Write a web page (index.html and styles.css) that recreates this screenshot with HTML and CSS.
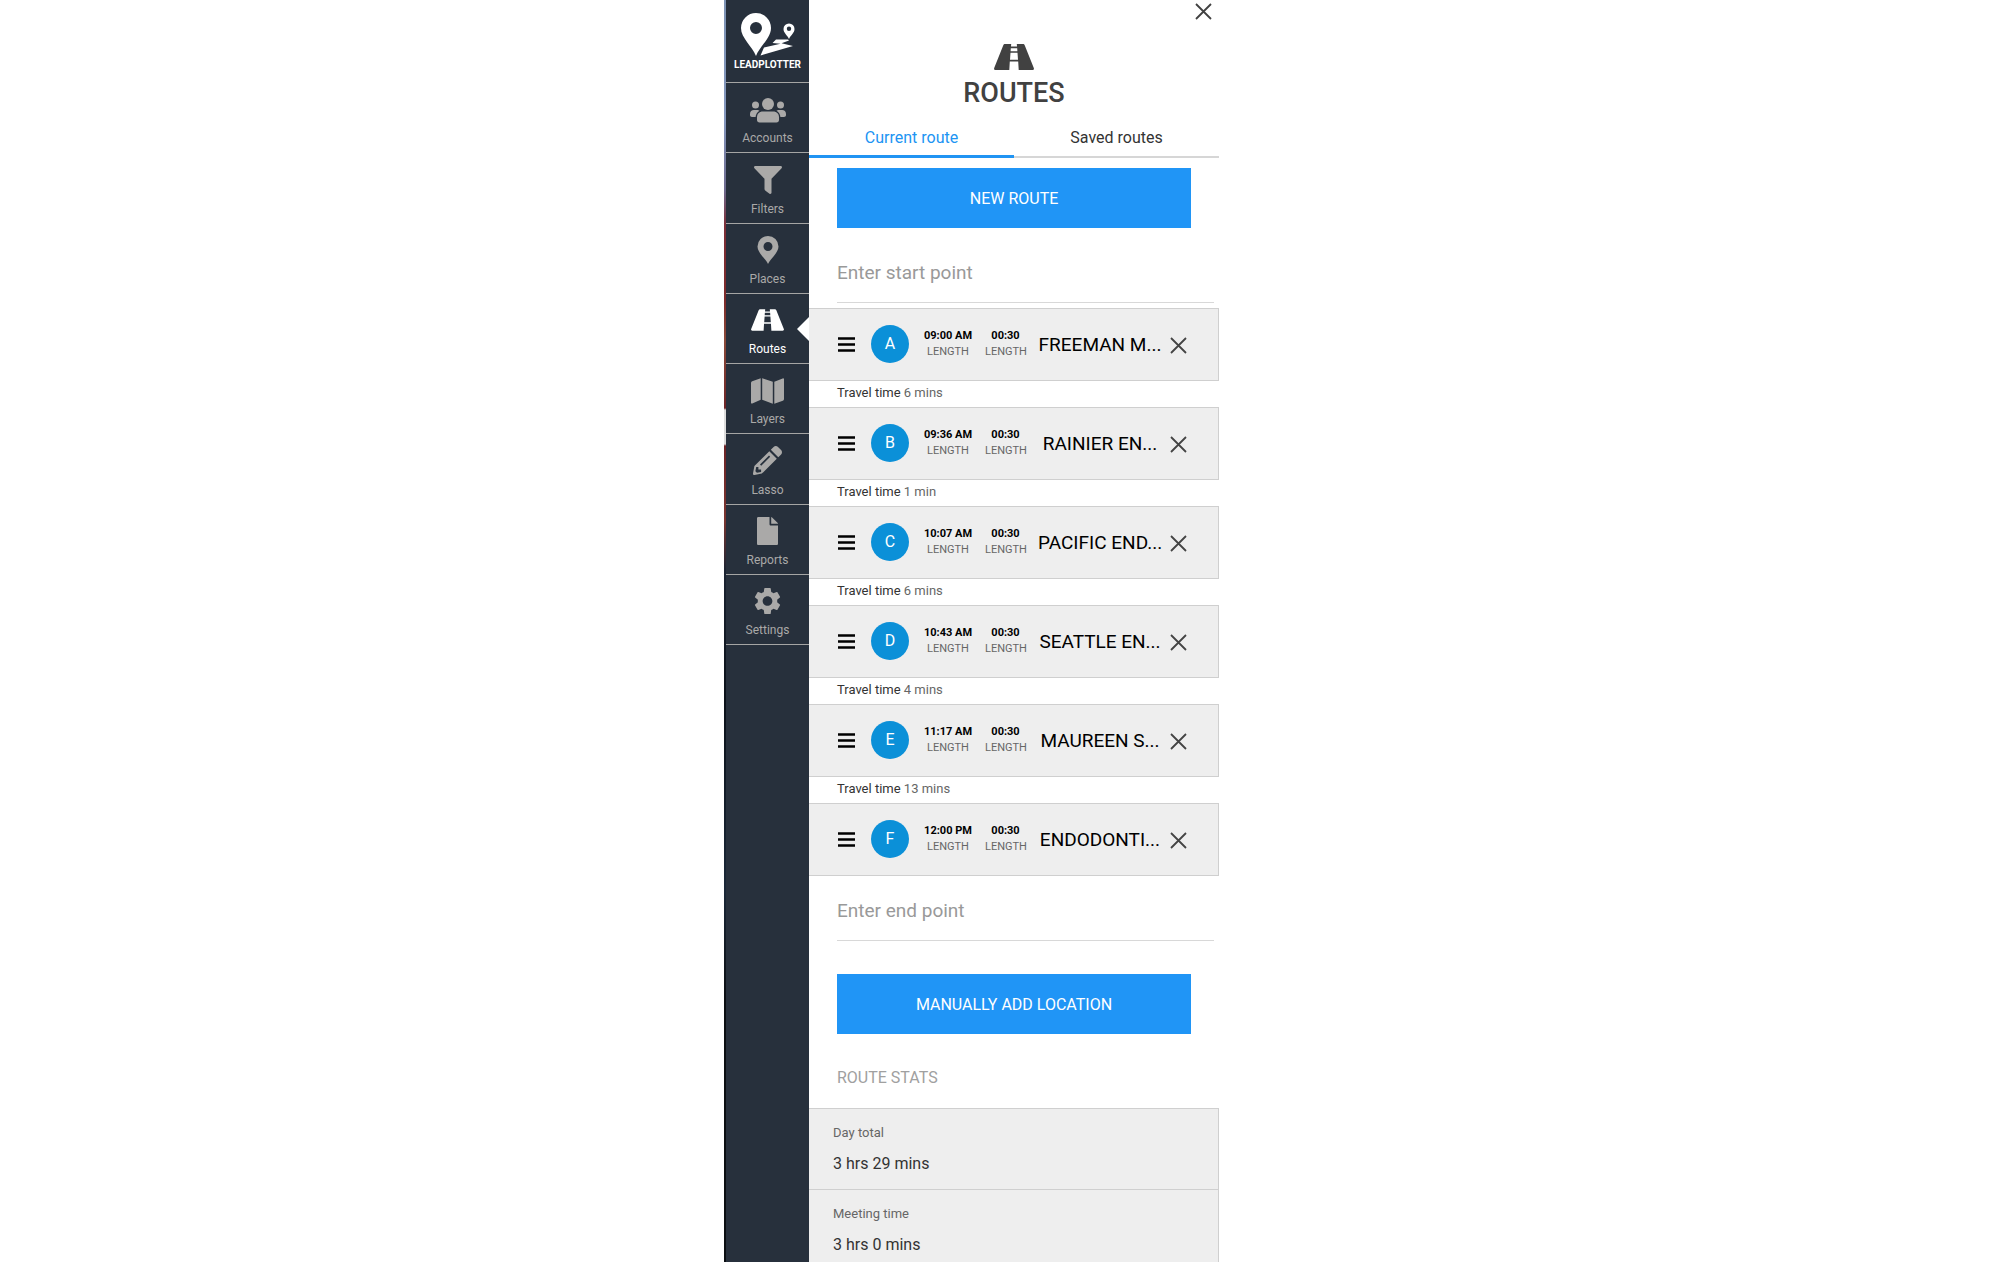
FILE: index.html
```html
<!DOCTYPE html>
<html lang="en">
<head>
<meta charset="utf-8">
<title>LeadPlotter – Routes</title>
<link rel="stylesheet" href="styles.css">
</head>
<body>
<svg class="sprite" aria-hidden="true">
  <symbol id="road" viewBox="0 0 40 26">
    <path d="M11 0h6.200L17 2.600h6L22.800 0H29c.8 0 1.400.5 1.700 1.200L39.800 24c.4 1.100-.2 2-1.300 2H24.700l-.5-8.500h-8.400l-.5 8.500H1.500C.4 26-.2 25.100.2 24L9.300 1.200C9.600.500 10.200 0 11 0zM16.800 4.200l-.2 3h6.800l-.2-3zM16.500 8.800l-.5 7h8l-.5-7z" fill-rule="evenodd"/>
  </symbol>
  <symbol id="cross" viewBox="0 0 17 17"><path d="M1 1l15 15M16 1L1 16" fill="none" stroke="currentColor" stroke-width="1.800"/></symbol>
  <symbol id="bars" viewBox="0 0 17 15"><path d="M0 1.500h17M0 7.500h17M0 13.500h17" fill="none" stroke="currentColor" stroke-width="2.600"/></symbol>
</svg>
<div class="app">
  <nav class="sidebar" aria-label="Main">
    <a class="logo" href="#">
      <svg viewBox="0 0 56 44" width="56" height="44" aria-hidden="true">
        <path fill-rule="evenodd" d="M16 43C12 33 1 25 1 15a15 15 0 0 1 30 0C31 25 20 33 16 43zM16 9a6 6 0 1 0 0 12 6 6 0 0 0 0-12z"/>
        <path fill-rule="evenodd" d="M49 26c-1.800-4-5.500-6-5.500-10a5.500 5.500 0 0 1 11 0c0 4-3.700 6-5.500 10zM49 13.500a2.200 2.200 0 1 0 0 4.400 2.200 2.200 0 0 0 0-4.400z"/>
        <path d="M48 26.500H36L32.500 30l8 .8L24 34.500 20.500 42.500 53 33l-11.500-2.800 7.500-2.700z"/>
      </svg>
      <span>LEADPLOTTER</span>
    </a>
    <ul class="menu">
      <li><a class="item" href="#"><svg viewBox="0 0 36 26" width="36" height="26" aria-hidden="true"><circle cx="18" cy="7" r="6"/><circle cx="5.500" cy="8" r="3.500"/><circle cx="30.500" cy="8" r="3.500"/><path d="M13 14.500h10c4 0 6 2.500 6 6V23c0 1.500-1 2.500-2.500 2.500h-17C8 25.500 7 24.500 7 23v-2.500c0-3.500 2-6 6-6zM4 13h3c1 0 2 .3 2.500.8C7 15.500 5.800 17.500 5.600 20H2c-1.200 0-2-.8-2-2v-1c0-2.400 1.600-4 4-4zM32 13h-3c-1 0-2 .3-2.500.8 2.500 1.700 3.700 3.700 3.900 6.200H34c1.200 0 2-.8 2-2v-1c0-2.400-1.600-4-4-4z"/></svg><span>Accounts</span></a></li>
      <li><a class="item" href="#"><svg viewBox="0 0 28 28" width="28" height="28" aria-hidden="true"><path d="M1.300 0h25.400c1.200 0 1.700 1.400.9 2.200L17.500 12.800v14c0 1.100-1.200 1.500-2 .9l-4-3c-.6-.4-1-1-1-1.700V12.800L.4 2.200C-.4 1.400.1 0 1.300 0z"/></svg><span>Filters</span></a></li>
      <li><a class="item" href="#"><svg viewBox="0 0 22 28" width="22" height="28" aria-hidden="true"><path fill-rule="evenodd" d="M11 28C9 23 .5 17 .5 10.500a10.500 10.500 0 0 1 21 0C21.500 17 13 23 11 28zM11 6a4.500 4.500 0 1 0 0 9 4.500 4.500 0 0 0 0-9z"/></svg><span>Places</span></a></li>
      <li><a class="item active" href="#" aria-current="page"><svg width="33" height="22" aria-hidden="true"><use href="#road"/></svg><span>Routes</span></a></li>
      <li><a class="item" href="#"><svg viewBox="0 0 33 26" width="33" height="26" aria-hidden="true"><path d="M0 5c0-.9.500-1.500 1.200-1.800L9.700.2v21.500L1.300 25.500c-.7.300-1.300 0-1.300-.8zM11.200.2l10.600 3.600v21.900l-10.600-3.900zM23.300 3.800L31.700.4c.7-.3 1.300 0 1.300.8V21c0 .9-.5 1.500-1.200 1.800l-8.500 3z"/></svg><span>Layers</span></a></li>
      <li><a class="item" href="#"><svg viewBox="0 0 29 29" width="29" height="29" aria-hidden="true"><path fill-rule="evenodd" d="M16.300 5.200l7.500 7.500L8.800 27.600 1.500 29c-.9.200-1.600-.5-1.500-1.400l1.400-7.500zM3.200 21l-.8 4.200 1.500 1.500 4.200-.8v-2.300H5.400V21zM16 9.500l-9 9 1.200 1.200 9-9zM17.800 3.700L20.600.9c1.200-1.200 3.200-1.200 4.400 0l3.100 3.100c1.200 1.200 1.200 3.200 0 4.400l-2.800 2.800z"/></svg><span>Lasso</span></a></li>
      <li><a class="item" href="#"><svg viewBox="0 0 21 28" width="21" height="28" aria-hidden="true"><path d="M1.300 0h11.200v7.200c0 .7.600 1.300 1.300 1.300H21v18.200c0 .7-.6 1.300-1.300 1.300H1.300C.6 28 0 27.400 0 26.700V1.300C0 .6.600 0 1.300 0zM14.200 0c.4.100.7.200.9.500l5.400 5.300c.3.300.5.600.5 1h-6.800z"/></svg><span>Reports</span></a></li>
      <li><a class="item" href="#"><svg viewBox="2 2 20 20" width="27" height="28" aria-hidden="true"><path d="M19.140 12.940c.04-.3.060-.61.060-.94 0-.32-.02-.64-.07-.94l2.030-1.580c.18-.14.230-.41.120-.61l-1.920-3.320c-.12-.22-.37-.29-.59-.22l-2.390.96c-.5-.38-1.030-.7-1.620-.94l-.36-2.540c-.04-.24-.24-.41-.48-.41h-3.840c-.24 0-.43.17-.47.41l-.36 2.540c-.59.240-1.130.57-1.620.94l-2.390-.96c-.22-.08-.47 0-.59.220L2.740 8.870c-.12.210-.08.470.12.610l2.030 1.580c-.05.300-.09.630-.09.940s.02.640.07.940l-2.030 1.580c-.18.140-.23.410-.12.610l1.920 3.320c.12.220.37.290.59.220l2.390-.96c.5.380 1.030.7 1.620.94l.36 2.540c.05.240.24.410.48.410h3.840c.24 0 .44-.17.470-.41l.36-2.540c.59-.24 1.130-.56 1.620-.94l2.390.96c.22.080.47 0 .59-.22l1.920-3.320c.12-.22.070-.47-.12-.61l-2.010-1.580zM12 15.600c-1.980 0-3.600-1.620-3.600-3.600s1.620-3.600 3.600-3.600 3.600 1.620 3.600 3.600-1.620 3.600-3.600 3.600z"/></svg><span>Settings</span></a></li>
    </ul>
  </nav>

  <main class="panel">
    <header class="head">
      <button class="close" type="button" aria-label="Close panel"><svg width="17" height="17" aria-hidden="true"><use href="#cross"/></svg></button>
      <svg class="head-icon" width="40" height="26" aria-hidden="true"><use href="#road"/></svg>
      <h1>ROUTES</h1>
    </header>
    <div class="tabs" role="tablist">
      <button class="tab selected" type="button" role="tab" aria-selected="true">Current route</button>
      <button class="tab" type="button" role="tab" aria-selected="false">Saved routes</button>
    </div>
    <button class="primary" type="button">NEW ROUTE</button>
    <input class="point start" type="text" aria-label="Start point" placeholder="Enter start point">

    <ol class="stops">
      <li>
        <div class="stop"><button class="drag" type="button" aria-label="Reorder"><svg width="17" height="15" aria-hidden="true"><use href="#bars"/></svg></button><span class="badge">A</span><span class="slot"><b>09:00 AM</b>LENGTH</span><span class="slot"><b>00:30</b>LENGTH</span><span class="name">FREEMAN M...</span><button class="remove" type="button" aria-label="Remove"><svg width="17" height="17" aria-hidden="true"><use href="#cross"/></svg></button></div>
        <p class="travel">Travel time <span>6 mins</span></p>
      </li>
      <li>
        <div class="stop"><button class="drag" type="button" aria-label="Reorder"><svg width="17" height="15" aria-hidden="true"><use href="#bars"/></svg></button><span class="badge">B</span><span class="slot"><b>09:36 AM</b>LENGTH</span><span class="slot"><b>00:30</b>LENGTH</span><span class="name">RAINIER EN...</span><button class="remove" type="button" aria-label="Remove"><svg width="17" height="17" aria-hidden="true"><use href="#cross"/></svg></button></div>
        <p class="travel">Travel time <span>1 min</span></p>
      </li>
      <li>
        <div class="stop"><button class="drag" type="button" aria-label="Reorder"><svg width="17" height="15" aria-hidden="true"><use href="#bars"/></svg></button><span class="badge">C</span><span class="slot"><b>10:07 AM</b>LENGTH</span><span class="slot"><b>00:30</b>LENGTH</span><span class="name">PACIFIC END...</span><button class="remove" type="button" aria-label="Remove"><svg width="17" height="17" aria-hidden="true"><use href="#cross"/></svg></button></div>
        <p class="travel">Travel time <span>6 mins</span></p>
      </li>
      <li>
        <div class="stop"><button class="drag" type="button" aria-label="Reorder"><svg width="17" height="15" aria-hidden="true"><use href="#bars"/></svg></button><span class="badge">D</span><span class="slot"><b>10:43 AM</b>LENGTH</span><span class="slot"><b>00:30</b>LENGTH</span><span class="name">SEATTLE EN...</span><button class="remove" type="button" aria-label="Remove"><svg width="17" height="17" aria-hidden="true"><use href="#cross"/></svg></button></div>
        <p class="travel">Travel time <span>4 mins</span></p>
      </li>
      <li>
        <div class="stop"><button class="drag" type="button" aria-label="Reorder"><svg width="17" height="15" aria-hidden="true"><use href="#bars"/></svg></button><span class="badge">E</span><span class="slot"><b>11:17 AM</b>LENGTH</span><span class="slot"><b>00:30</b>LENGTH</span><span class="name">MAUREEN S...</span><button class="remove" type="button" aria-label="Remove"><svg width="17" height="17" aria-hidden="true"><use href="#cross"/></svg></button></div>
        <p class="travel">Travel time <span>13 mins</span></p>
      </li>
      <li>
        <div class="stop"><button class="drag" type="button" aria-label="Reorder"><svg width="17" height="15" aria-hidden="true"><use href="#bars"/></svg></button><span class="badge">F</span><span class="slot"><b>12:00 PM</b>LENGTH</span><span class="slot"><b>00:30</b>LENGTH</span><span class="name">ENDODONTI...</span><button class="remove" type="button" aria-label="Remove"><svg width="17" height="17" aria-hidden="true"><use href="#cross"/></svg></button></div>
      </li>
    </ol>

    <input class="point end" type="text" aria-label="End point" placeholder="Enter end point">
    <button class="primary" type="button">MANUALLY ADD LOCATION</button>
    <h2>ROUTE STATS</h2>
    <dl class="stats">
      <div><dt>Day total</dt><dd>3 hrs 29 mins</dd></div>
      <div><dt>Meeting time</dt><dd>3 hrs 0 mins</dd></div>
    </dl>
  </main>
</div>
</body>
</html>
```
FILE: styles.css
```css
* { box-sizing: border-box; }

body {
  margin: 0;
  background: #fff;
  color: #333;
  font-family: Roboto, "Liberation Sans", sans-serif;
}

button, input { font: inherit; border-radius: 0; }
button { border: 0; padding: 0; background: none; color: inherit; }
ul, ol, dl, dd, p { margin: 0; padding: 0; list-style: none; }
svg { display: block; fill: currentColor; }
.sprite { position: absolute; width: 0; height: 0; }

.app {
  display: grid;
  grid-template-columns: 85px minmax(0, 1fr);
  height: 100vh;
  overflow: hidden;
  padding: 0 39.05% 0 36.2%;
}

/* Navigation, with a thin strip of the map showing at its left edge */
.sidebar {
  padding-left: 2px;
  background:
    linear-gradient(#7d93b4 0, #8497bd 120px, #6d6a8e 190px, #7c2f38 225px, #7d2a2a 300px, #8a4a3a 340px, #6d2427 408px, #ddd 410px, #ddd 444px, #6d2427 446px, #7a3530 520px, #1c2432 570px, #0b1119 700px, #1b2838 890px, #0b0e12 1000px) 0 0 / 2px 100% no-repeat,
    #27303c;
  color: #aaa9a8;
}

.logo {
  display: flex;
  flex-direction: column;
  align-items: center;
  height: 83px;
  padding-top: 13px;
  border-bottom: 1px solid #a5a5a4;
  color: #fff;
  font-size: 10px;
  font-weight: 700;
  line-height: 16px;
  text-decoration: none;
}

.menu {
  display: grid;
  grid-auto-rows: 1fr;
  min-height: 562px;
}

.item {
  position: relative;
  display: grid;
  grid-template-rows: 1fr 20px;
  justify-items: center;
  align-items: center;
  height: 100%;
  padding: 8px 0 4px;
  border-bottom: 1px solid #a5a5a4;
  color: inherit;
  font-size: 12px;
  text-decoration: none;
}

.item.active { color: #fff; }

.item.active::after {
  content: "";
  position: absolute;
  right: 0;
  top: 23px;
  border: 12px solid transparent;
  border-left: 0;
  border-right-color: #fff;
}

/* Routes panel */
.panel {
  display: flex;
  flex-direction: column;
  overflow-y: auto;
  scrollbar-width: none;
}

.panel > * { flex-shrink: 0; }

.head {
  position: relative;
  display: flex;
  flex-direction: column;
  align-items: center;
  padding-top: 44px;
  color: #414141;
}

.close { position: absolute; top: 3px; right: 7px; }

h1 {
  margin: 7px 0 0;
  font-size: 27px;
  font-weight: 500;
  line-height: 32px;
}

.tabs {
  display: grid;
  grid-template-columns: 1fr 1fr;
  height: 49px;
  margin-bottom: 10px;
}

.tab {
  padding-top: 10px;
  border-bottom: 2px solid #d6d6d6;
  font-size: 16px;
}

.tab.selected { border-bottom: 3px solid #2094f3; color: #2094f3; }

.primary {
  height: 60px;
  margin: 0 28px;
  background: #2095f6;
  color: #fff;
  font-size: 16px;
}

.point {
  height: 60px;
  margin: 15px 5px 5px 28px;
  padding: 0;
  border: 0;
  border-bottom: 1px solid #d8d8d8;
  background: none;
  font-size: 19px;
}

.point.end { margin: 5px 5px 33px 28px; }
.point::placeholder { color: #999; opacity: 1; }

.stop {
  display: grid;
  grid-template-columns: 17px 38px 50px 41px 1fr 17px;
  column-gap: 12px;
  align-items: center;
  height: 73px;
  padding: 0 31px 0 29px;
  border: 1px solid #cfcfcf;
  border-left: 0;
  background: #eee;
  color: #000;
}

.badge {
  height: 38px;
  margin: 0 -4px 2px 4px;
  border-radius: 50%;
  background: #0b90d8;
  color: #fff;
  font-size: 16px;
  line-height: 38px;
  text-align: center;
}

.slot {
  margin: 0 -6px 2px 6px;
  color: #666;
  font-size: 11px;
  line-height: 16px;
  text-align: center;
  white-space: nowrap;
}

.slot b { display: block; color: #000; }
.name { margin: 0 -4px 0 6px; font-size: 19px; text-align: center; white-space: nowrap; }
.remove { margin-top: 2px; color: #444; }

.travel {
  height: 26px;
  padding-left: 28px;
  color: #333;
  font-size: 13px;
  line-height: 24px;
}

.travel span { color: #666; }

h2 {
  margin: 32px 28px 18px;
  color: #a0a0a0;
  font-size: 16px;
  font-weight: 400;
  line-height: 24px;
}

.stats { border: 1px solid #cfcfcf; border-left: 0; background: #eee; }
.stats div { padding: 14px 24px; }
.stats div + div { border-top: 1px solid #cfcfcf; }
.stats dt { color: #666; font-size: 13px; line-height: 20px; }
.stats dd { margin-top: 10px; font-size: 16px; line-height: 22px; }
```
